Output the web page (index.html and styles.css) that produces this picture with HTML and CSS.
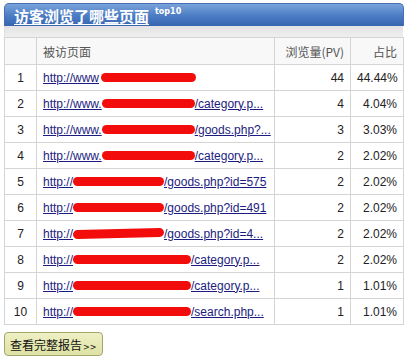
FILE: index.html
```html
<!DOCTYPE html>
<html>
<head>
<meta charset="utf-8">
<link rel="stylesheet" href="styles.css">
</head>
<body>
<div class="panel">
  <div class="title-bar">
    <a class="title" href="#">访客浏览了哪些页面</a><sup class="tag">top10</sup>
  </div>
  <div class="band"></div>
  <table class="grid">
    <colgroup>
      <col class="c-no"><col class="c-url"><col class="c-pv"><col class="c-pct">
    </colgroup>
    <thead>
      <tr><th></th><th class="l">被访页面</th><th class="r">浏览量(PV)</th><th class="r">占比</th></tr>
    </thead>
    <tbody>
      <tr><td class="n">1</td><td><a href="#">http://www<span class="red wa"></span></a></td><td class="r">44</td><td class="r">44.44%</td></tr>
      <tr><td class="n">2</td><td><a href="#">http://www.<span class="red wb"></span>/category.p...</a></td><td class="r">4</td><td class="r">4.04%</td></tr>
      <tr><td class="n">3</td><td><a href="#">http://www.<span class="red wb"></span>/goods.php?...</a></td><td class="r">3</td><td class="r">3.03%</td></tr>
      <tr><td class="n">4</td><td><a href="#">http://www.<span class="red wb"></span>/category.p...</a></td><td class="r">2</td><td class="r">2.02%</td></tr>
      <tr><td class="n">5</td><td><a href="#">http://<span class="red wc"></span>/goods.php?id=575</a></td><td class="r">2</td><td class="r">2.02%</td></tr>
      <tr><td class="n">6</td><td><a href="#">http://<span class="red wc"></span>/goods.php?id=491</a></td><td class="r">2</td><td class="r">2.02%</td></tr>
      <tr><td class="n">7</td><td><a href="#">http://<span class="red wc tilt"></span>/goods.php?id=4...</a></td><td class="r">2</td><td class="r">2.02%</td></tr>
      <tr><td class="n">8</td><td><a href="#">http://<span class="red wd"></span>/category.p...</a></td><td class="r">2</td><td class="r">2.02%</td></tr>
      <tr><td class="n">9</td><td><a href="#">http://<span class="red wd"></span>/category.p...</a></td><td class="r">1</td><td class="r">1.01%</td></tr>
      <tr><td class="n">10</td><td><a href="#">http://<span class="red wd"></span>/search.php...</a></td><td class="r">1</td><td class="r">1.01%</td></tr>
    </tbody>
  </table>
  <div class="actions">
    <button class="more">查看完整报告<span class="arrows">&gt;&gt;</span></button>
  </div>
</div>
</body>
</html>
```
FILE: styles.css
```css
html, body {
  margin: 0;
  padding: 0;
  background: #ffffff;
}
body {
  font-family: "Liberation Sans", Arial, "Noto Sans CJK SC", sans-serif;
  font-size: 12px;
  color: #222;
}
.panel {
  width: 400px;
  padding: 3px 0 0 4px;
}
.title-bar {
  height: 23px;
  box-sizing: border-box;
  border-radius: 5px 5px 0 0;
  background: linear-gradient(#7aa3da, #4a7bc3 55%, #3766b1);
  border: 1px solid #4670b3;
  border-bottom: none;
  padding-left: 9px;
  display: flex;
  align-items: center;
}
.title {
  color: #fff;
  font-family: "Noto Sans CJK SC", sans-serif;
  font-weight: bold;
  font-size: 15px;
  line-height: 18px;
  text-decoration: underline;
  text-underline-offset: 2px;
  margin-top: 1px;
}
.tag {
  color: #fff;
  font-family: "DejaVu Sans", sans-serif;
  font-weight: bold;
  font-size: 8px;
  align-self: flex-start;
  margin: 3px 0 0 6px;
}
.band {
  height: 11px;
  width: 399px;
  background: linear-gradient(#e3e3e3, #efefef);
  border-left: 1px solid #e0e0e0;
  box-sizing: border-box;
}
.grid {
  width: 400px;
  border-collapse: collapse;
  table-layout: fixed;
}
.c-no { width: 32px; }
.c-url { width: 238px; }
.c-pv { width: 76px; }
.c-pct { width: 53px; }
.grid th, .grid td {
  border: 1px solid #d4d4d4;
  height: 25px;
  padding: 0 6px;
  white-space: nowrap;
  overflow: hidden;
}
.grid th {
  height: 26px;
  background: #f8f8f8;
  font-family: "Noto Sans CJK SC", sans-serif;
  font-weight: normal;
  color: #555;
  font-size: 12px;
}
.grid th.l { text-align: left; }
.grid .r { text-align: right; }
.grid td.n { text-align: center; padding: 0; }
.grid td.r { color: #222; font-size: 12px; }
.grid a {
  color: #1c1c80;
  text-decoration: underline;
}
.red {
  display: inline-block;
  height: 9px;
  background: #f20c0c;
  border-radius: 5px;
  vertical-align: 0;
}
.wa { width: 95px; margin-left: 2px; }
.wb { width: 93px; }
.wc { width: 91px; }
.wd { width: 118px; }
.tilt { transform: rotate(-1.5deg); }
.actions {
  padding-top: 7px;
}
.more {
  height: 24px;
  width: 99px;
  padding: 0 0 0 5px;
  text-align: left;
  border: 1px solid #a3a66c;
  border-radius: 4px;
  background: linear-gradient(#eef0c4, #dfe2a4);
  font-family: "Noto Sans CJK SC", sans-serif;
  font-size: 12px;
  color: #111;
  cursor: pointer;
}
.arrows {
  font-family: "DejaVu Sans", sans-serif;
  font-size: 8px;
  margin-left: 1px;
}
```
